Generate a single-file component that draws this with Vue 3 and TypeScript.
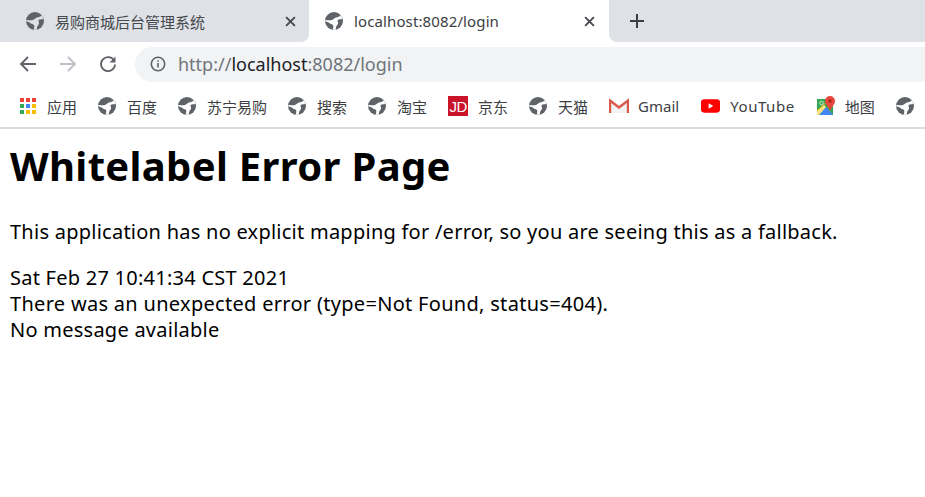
<script setup lang="ts">
interface Mark { label: string; kind: string }
const marks: Mark[] = [
  { label: '百度', kind: 'globe' },
  { label: '苏宁易购', kind: 'globe' },
  { label: '搜索', kind: 'globe' },
  { label: '淘宝', kind: 'globe' },
  { label: '京东', kind: 'jd' },
  { label: '天猫', kind: 'globe' },
  { label: 'Gmail', kind: 'gmail' },
  { label: 'YouTube', kind: 'yt' },
  { label: '地图', kind: 'maps' },
  { label: '', kind: 'globe' }
]
const swoosh = 'M15.500 3.300C16.500 4.500 17.300 5.800 17.700 7L13.500 7.500C12 7.800 12.500 9.500 13 10.500C13.500 12 12 13 11.500 14C11 15 11 16 10.800 17.800L7.700 17.800C8 16 8.800 14.500 8 13C7.500 12 6 12.500 5 11.500C4 10.500 2.500 9.500 .3 9.500L.3 8C3 8 5 8.800 7 8C9 7.200 9 6 11 5.500C13 5 14.500 5 15.500 3.300Z'
</script>

<template>
  <div class="page">
    <div class="strip">
      <div class="tab idle">
        <svg class="fav" viewBox="0 0 18 18"><circle cx="9" cy="9" r="9" fill="#5f6368" /><path :d="swoosh" fill="#dee1e6" /></svg>
        <span class="tab-title idle-title">易购商城后台管理系统</span>
        <svg class="close" viewBox="0 0 10 10"><path d="M1 1l8 8M9 1L1 9" stroke="#45484c" stroke-width="1.700" /></svg>
      </div>
      <div class="tab active">
        <svg class="fav" viewBox="0 0 18 18"><circle cx="9" cy="9" r="9" fill="#5f6368" /><path :d="swoosh" fill="#fff" /></svg>
        <span class="tab-title">localhost:8082/login</span>
        <svg class="close" viewBox="0 0 10 10"><path d="M1 1l8 8M9 1L1 9" stroke="#45484c" stroke-width="1.700" /></svg>
      </div>
      <div class="rest">
        <svg class="plus" viewBox="0 0 16 16"><path d="M8 1v14M1 8h14" stroke="#3c4043" stroke-width="2" /></svg>
      </div>
    </div>

    <div class="toolbar">
      <svg class="nav" viewBox="0 0 18 18"><path d="M17 9H2M9 2L2 9l7 7" fill="none" stroke="#5f6368" stroke-width="1.800" /></svg>
      <svg class="nav" viewBox="0 0 18 18"><path d="M1 9h15M9 2l7 7-7 7" fill="none" stroke="#bdc1c6" stroke-width="1.800" /></svg>
      <svg class="nav" viewBox="0 0 18 18"><path d="M15 5.500A7 7 0 1 0 16 9.500" fill="none" stroke="#5f6368" stroke-width="1.800" /><path d="M16.500 1.500v6h-6z" fill="#5f6368" /></svg>
      <div class="omni">
        <svg class="info" viewBox="0 0 16 16"><circle cx="8" cy="8" r="6.700" fill="none" stroke="#5f6368" stroke-width="1.600" /><path d="M7.200 7h1.600v4.500H7.200zM7.200 4.200h1.600v1.600H7.200z" fill="#5f6368" /></svg>
        <span class="url"><span class="dim">http://</span><span class="host">localhost</span><span class="dim">:8082/login</span></span>
      </div>
    </div>

    <div class="marks">
      <div class="mark">
        <svg class="apps" viewBox="0 0 16 16">
          <g fill="#ea4335"><rect x="0" y="0" width="4" height="4" /><rect x="6" y="0" width="4" height="4" /><rect x="12" y="0" width="4" height="4" /></g>
          <rect x="0" y="6" width="4" height="4" fill="#34a853" /><rect x="6" y="6" width="4" height="4" fill="#4285f4" /><rect x="12" y="6" width="4" height="4" fill="#fbbc05" />
          <rect x="0" y="12" width="4" height="4" fill="#34a853" /><rect x="6" y="12" width="4" height="4" fill="#fbbc05" /><rect x="12" y="12" width="4" height="4" fill="#fbbc05" />
        </svg>
        <span class="mark-label">应用</span>
      </div>
      <div v-for="m in marks" :key="m.label + m.kind" class="mark">
        <svg v-if="m.kind === 'globe'" class="fav" viewBox="0 0 18 18"><circle cx="9" cy="9" r="9" fill="#5f6368" /><path :d="swoosh" fill="#fff" /></svg>
        <div v-else-if="m.kind === 'jd'" class="jd">JD</div>
        <svg v-else-if="m.kind === 'gmail'" class="mail" viewBox="0 0 20 16">
          <path d="M1 15V2l9 7 9-7v13" fill="#f2f2f2" />
          <path d="M1 15V2.500L10 9.500l9-7V15" fill="none" stroke="#d8584c" stroke-width="2.400" />
        </svg>
        <svg v-else-if="m.kind === 'yt'" class="tube" viewBox="0 0 20 14">
          <rect width="20" height="14" rx="3.500" fill="#f00" /><path d="M8 4l5 3-5 3z" fill="#fff" />
        </svg>
        <svg v-else-if="m.kind === 'maps'" class="map" viewBox="0 0 20 20">
          <rect x="1" y="3" width="16" height="16" fill="#34a853" />
          <path d="M3 19L10 11l7 8z" fill="#4285f4" />
          <path d="M1 19v-4l7-6 2 2-7 8z" fill="#fbe38a" />
          <path d="M1 15L9.500 7" stroke="#fbbc05" stroke-width="1" />
          <circle cx="5.500" cy="7" r="1.800" fill="none" stroke="#c8e6c9" stroke-width="1" />
          <path d="M14 0a5 5 0 0 1 5 5c0 3.500-3.500 5.500-5 10-1.500-4.500-5-6.500-5-10a5 5 0 0 1 5-5z" fill="#e8453c" /><circle cx="14" cy="5" r="1.700" fill="#a52714" />
        </svg>
        <span v-if="m.label" class="mark-label" :class="{ latin: m.kind === 'gmail' || m.kind === 'maps', wide: m.kind === 'yt' }">{{ m.label }}</span>
      </div>
    </div>

    <main class="content">
      <h1>Whitelabel Error Page</h1>
      <p>This application has no explicit mapping for /error, so you are seeing this as a fallback.</p>
      <div>Sat Feb 27 10:41:34 CST 2021</div>
      <div class="wide-line">There was an unexpected error (type=Not Found, status=404).</div>
      <div>No message available</div>
    </main>
  </div>
</template>

<style>
html, body { margin: 0; background: #fff; overflow: hidden; }
</style>

<style scoped>
.page { width: 925px; height: 497px; overflow: hidden; font-family: "Noto Sans", "Noto Sans CJK SC", sans-serif; color: #000; }
.strip { display: flex; height: 42px; background: #fff; }
.tab { display: flex; align-items: center; box-sizing: border-box; height: 42px; }
.idle { width: 309px; padding-left: 26px; padding-right: 13px; background: #dee1e6; border-bottom-right-radius: 8px; }
.active { position: relative; width: 300px; padding-left: 16px; padding-right: 14px; background: #fff; border-radius: 8px 8px 0 0; }
.active::before, .active::after { content: ""; position: absolute; top: 0; width: 8px; height: 8px; z-index: -1; background: #dee1e6; }
.active::before { left: 0; }
.active::after { right: 0; }
.rest { flex: 1; display: flex; align-items: center; padding-left: 20px; background: #dee1e6; border-bottom-left-radius: 8px; }
.fav { width: 18px; height: 18px; flex: none; }
.tab-title { flex: 1; margin-left: 11px; font-size: 15px; letter-spacing: .12px; color: #3c4043; white-space: nowrap; }
.idle-title { color: #45484c; letter-spacing: 0; }
.close { width: 11px; height: 11px; flex: none; }
.plus { width: 16px; height: 16px; }
.toolbar { display: flex; align-items: center; height: 43px; padding-left: 19px; box-sizing: border-box; padding-top: 1px; }
.nav { width: 18px; height: 18px; margin-right: 22px; flex: none; }
.omni { display: flex; align-items: center; flex: 1; height: 35px; margin-left: -4px; padding-left: 15px; background: #f1f3f4; border-radius: 18px 0 0 18px; }
.info { width: 16px; height: 16px; }
.url { margin-left: 12px; font-size: 18px; white-space: nowrap; }
.dim { color: #70757a; }
.host { color: #202124; }
.marks { display: flex; align-items: center; height: 42px; padding-left: 20px; border-bottom: 2px solid #dadce0; box-sizing: content-box; white-space: nowrap; }
.mark { display: flex; align-items: center; flex: none; margin-right: 21px; }
.mark-label { margin-left: 10px; font-size: 15px; color: #3c4043; }
.latin { margin-left: 9px; }
.wide { letter-spacing: .55px; margin-left: 10px; }
.fav + .mark-label { margin-left: 11px; }
.apps { width: 16px; height: 16px; margin-right: 1px; }
.jd { width: 20px; height: 20px; background: #c9142a; color: #fff; font-family: "Liberation Sans", sans-serif; font-size: 15px; line-height: 21px; text-align: center; letter-spacing: -.5px; }
.mail { width: 20px; height: 16px; }
.tube { width: 19px; height: 14px; margin-left: 1px; }
.map { width: 20px; height: 20px; }
.content { padding: 10px 10px 0; font-size: 20px; line-height: 26px; letter-spacing: .25px; }
h1 { margin: 0 0 26px; font-size: 40px; line-height: 54px; font-weight: 700; letter-spacing: .33px; }
p { margin: 0 0 20px; }
.wide-line { letter-spacing: .3px; }
</style>
